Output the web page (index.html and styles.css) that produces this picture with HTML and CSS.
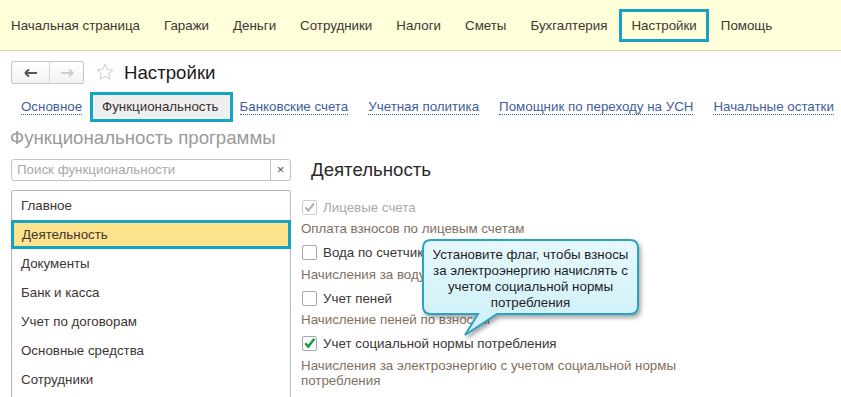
FILE: index.html
```html
<!DOCTYPE html>
<html lang="ru">
<head>
<meta charset="utf-8">
<title>Настройки</title>
<link rel="stylesheet" href="styles.css">
</head>
<body>
<div class="topbar">
  <nav class="menu">
    <span class="menu-item">Начальная страница</span>
    <span class="menu-item">Гаражи</span>
    <span class="menu-item">Деньги</span>
    <span class="menu-item">Сотрудники</span>
    <span class="menu-item">Налоги</span>
    <span class="menu-item">Сметы</span>
    <span class="menu-item">Бухгалтерия</span>
    <span class="menu-item active">Настройки</span>
    <span class="menu-item">Помощь</span>
  </nav>
</div>
<div class="page">
  <div class="titlerow">
    <div class="navbtns">
      <span class="nb back"><svg width="14" height="10" viewBox="0 0 14 10"><path d="M1 5H13M1 5L5 1.5M1 5L5 8.5" stroke="#555" stroke-width="2" fill="none"/></svg></span>
      <span class="nb fwd"><svg width="14" height="10" viewBox="0 0 14 10"><path d="M1 5H13M13 5L9 1.5M13 5L9 8.5" stroke="#cfcfcf" stroke-width="2" fill="none"/></svg></span>
    </div>
    <svg class="star" width="18" height="18" viewBox="0 0 18 18"><path d="M9 1.2L11.3 6.4L16.8 6.9L12.6 10.6L13.9 16.2L9 13.3L4.1 16.2L5.4 10.6L1.2 6.9L6.7 6.4Z" fill="none" stroke="#c9c9c9" stroke-width="1"/></svg>
    <h1 class="title">Настройки</h1>
  </div>
  <div class="tabs">
    <span class="tab-link first">Основное</span>
    <span class="tab-active">Функциональность</span>
    <span class="tab-link near">Банковские счета</span>
    <span class="tab-link">Учетная политика</span>
    <span class="tab-link">Помощник по переходу на УСН</span>
    <span class="tab-link">Начальные остатки</span>
  </div>
  <h2 class="section">Функциональность программы</h2>
  <div class="content">
    <aside class="left">
      <div class="search"><span class="ph">Поиск функциональности</span><span class="clear">×</span></div>
      <ul class="list">
        <li class="item">Главное</li>
        <li class="item selected">Деятельность</li>
        <li class="item">Документы</li>
        <li class="item">Банк и касса</li>
        <li class="item">Учет по договорам</li>
        <li class="item">Основные средства</li>
        <li class="item">Сотрудники</li>
      </ul>
    </aside>
    <section class="right">
      <h3 class="rhead">Деятельность</h3>
      <div class="group">
        <div class="cbrow disabled"><span class="cb"><svg width="13" height="13" viewBox="0 0 13 13"><path d="M2.5 6.5L5.3 9.5L11 2.5" stroke="#b5b5b5" stroke-width="2.2" fill="none"/></svg></span><span>Лицевые счета</span></div>
        <div class="desc">Оплата взносов по лицевым счетам</div>
      </div>
      <div class="group">
        <div class="cbrow"><span class="cb"></span><span>Вода по счетчикам</span></div>
        <div class="desc">Начисления за воду по счетчикам</div>
      </div>
      <div class="group">
        <div class="cbrow"><span class="cb"></span><span>Учет пеней</span></div>
        <div class="desc">Начисление пеней по взносам</div>
      </div>
      <div class="group">
        <div class="cbrow"><span class="cb"><svg width="13" height="13" viewBox="0 0 13 13"><path d="M2.3 6.3L5.3 9.6L11.3 1.8" stroke="#1d9a3c" stroke-width="2.4" fill="none"/></svg></span><span>Учет социальной нормы потребления</span></div>
        <div class="desc">Начисления за электроэнергию с учетом социальной нормы потребления</div>
      </div>
    </section>
  </div>
  <div class="callout">
    <svg class="bubble" width="232" height="104" viewBox="0 0 232 104">
      <defs>
        <linearGradient id="bg" x1="0" y1="0" x2="0" y2="1">
          <stop offset="0" stop-color="#e6f9fd"/>
          <stop offset="1" stop-color="#cdeff8"/>
        </linearGradient>
      </defs>
      <path d="M11 3H210Q218 3 218 11V69Q218 77 210 77H77L45 98L58 77H11Q3 77 3 69V11Q3 3 11 3Z" fill="url(#bg)" stroke="#2ba4c4" stroke-width="2"/>
    </svg>
    <div class="callout-text">Установите флаг, чтобы взносы<br>за электроэнергию начислять с<br>учетом социальной нормы<br>потребления</div>
  </div>
</div>
</body>
</html>
```
FILE: styles.css
```css
* { box-sizing: border-box; }
html, body { margin: 0; padding: 0; }
body {
  width: 841px;
  height: 397px;
  overflow: hidden;
  background: #fff;
  font-family: "Liberation Sans", Arial, sans-serif;
  font-size: 13.33px;
  color: #404040;
}
.topbar {
  height: 51px;
  background: #ffffd9;
  border-bottom: 1px solid #d8d3ad;
  display: flex;
  align-items: center;
}
.menu {
  display: flex;
  align-items: center;
  margin-left: -1px;
}
.menu-item {
  padding: 3px 9px;
  line-height: 21px;
  border: 3px solid transparent;
  color: #3e3535;
  white-space: nowrap;
}
.menu-item.active { border-color: #16a2c2; }
.page {
  position: relative;
  padding-left: 11px;
  padding-top: 10px;
}
.titlerow {
  display: flex;
  align-items: center;
  height: 23px;
}
.navbtns {
  display: flex;
  width: 73px;
  height: 23px;
  border: 1px solid #c6c6c6;
  border-radius: 2px;
  background: linear-gradient(#ffffff, #f3f3f3);
}
.nb {
  flex: 1;
  display: flex;
  align-items: center;
  justify-content: center;
}
.nb.back { border-right: 1px solid #d4d4d4; flex: 0 0 38px; }
.star { margin-left: 12px; margin-top: -2px; }
.title {
  margin: 0 0 0 10px;
  font-size: 18.67px;
  font-weight: normal;
  line-height: 23px;
  color: #1a1a1a;
}
.tabs {
  display: flex;
  align-items: center;
  height: 30px;
  margin-top: 8px;
  padding-left: 10px;
}
.tab-link {
  color: #3f5d9a;
  border-bottom: 1px dotted #3f5d9a;
  line-height: 15px;
  margin-left: 20px;
  white-space: nowrap;
}
.tab-link.first { margin-left: 0; }
.tab-link.near { margin-left: 7px; }
.tab-active {
  margin-left: 8px;
  height: 30px;
  padding: 0 11px 0 9px;
  border: 3px solid #16a2c2;
  background: #efefef;
  color: #3a3030;
  line-height: 24px;
  white-space: nowrap;
}
.section {
  margin: 3px 0 0 -1px;
  font-size: 18.67px;
  font-weight: normal;
  line-height: 26px;
  color: #9a9a9a;
}
.content {
  display: flex;
  margin-top: 8px;
}
.left {
  width: 280px;
  flex: 0 0 280px;
}
.search {
  display: flex;
  height: 22px;
  border: 1px solid #c3c3c3;
  border-radius: 3px;
}
.ph {
  flex: 1;
  padding-left: 5px;
  line-height: 20px;
  color: #a9a9a9;
}
.clear {
  width: 20px;
  border-left: 1px solid #c3c3c3;
  text-align: center;
  line-height: 19px;
  font-size: 13px;
  color: #555;
}
.list {
  list-style: none;
  margin: 9px 0 0;
  padding: 0;
  height: 260px;
  border: 1px solid #b9b9b9;
  border-radius: 2px 2px 0 0;
}
.item {
  height: 29px;
  line-height: 29px;
  padding-left: 9px;
  color: #3e3535;
}
.item.selected {
  margin: 0 -1px;
  padding-left: 8px;
  line-height: 23px;
  border: 3px solid #16a2c2;
  background: #fce38b;
}
.right {
  margin-left: 10px;
  flex: 1;
}
.rhead {
  margin: 0;
  padding-left: 10px;
  font-size: 18.67px;
  font-weight: normal;
  line-height: 22px;
  color: #2a2a2a;
}
.group { margin-top: 5.5px; }
.group:first-of-type { margin-top: 15px; }
.cbrow {
  display: flex;
  align-items: center;
  height: 22px;
  color: #3e3535;
  white-space: nowrap;
}
.cbrow.disabled { color: #aaaaaa; }
.cb {
  width: 15px;
  height: 15px;
  margin: 0 6px 0 1px;
  border: 1px solid #a7a7a7;
  border-radius: 2px;
  background: #fff;
  display: flex;
  align-items: center;
  justify-content: center;
}
.cbrow.disabled .cb { border-color: #cdcdcd; }
.desc {
  margin-top: 3px;
  width: 390px;
  line-height: 15px;
  color: #7f7062;
}
.callout {
  position: absolute;
  left: 420px;
  top: 186px;
  width: 232px;
  height: 104px;
}
.bubble {
  display: block;
  filter: drop-shadow(2px 3px 2px rgba(0, 0, 0, 0.35));
}
.callout-text {
  position: absolute;
  left: 3px;
  top: 10px;
  width: 215px;
  text-align: center;
  line-height: 16px;
  color: #1e1e1e;
}
```
